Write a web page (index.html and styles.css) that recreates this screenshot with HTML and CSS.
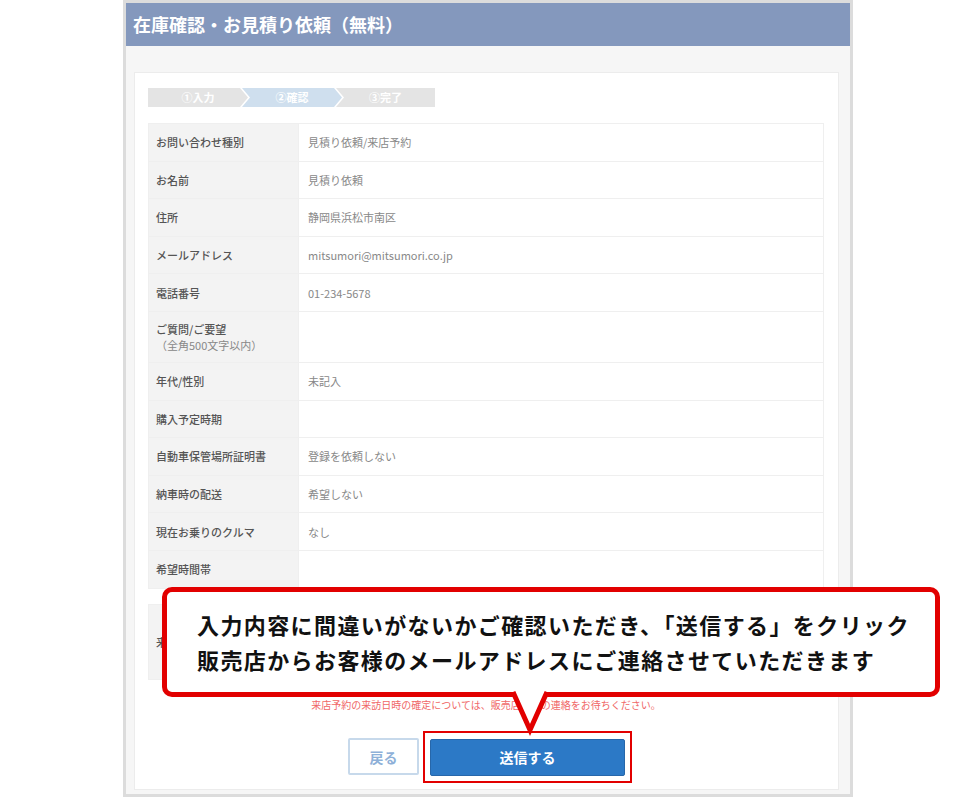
FILE: index.html
```html
<!DOCTYPE html>
<html lang="ja">

<head>
    <meta charset="UTF-8">
    <meta name="viewport" content="width=device-width, initial-scale=1.0">
    <title>在庫確認・お見積り依頼（無料）</title>
    <link rel="stylesheet" href="styles.css">
</head>

<body>

    <div class="frame">
        <h1 class="frame-title">在庫確認・お見積り依頼（無料）</h1>

        <div class="frame-body">
            <div class="card">
                <div class="steps">
                    <div class="step step-first">①入力</div>
                    <div class="step step-mid current">②確認</div>
                    <div class="step step-last">③完了</div>
                </div>

                <table class="confirm-table">
                    <tr><th>お問い合わせ種別</th><td>見積り依頼/来店予約</td></tr>
                    <tr><th>お名前</th><td>見積り依頼</td></tr>
                    <tr><th>住所</th><td>静岡県浜松市南区</td></tr>
                    <tr><th>メールアドレス</th><td>mitsumori@mitsumori.co.jp</td></tr>
                    <tr><th>電話番号</th><td>01-234-5678</td></tr>
                    <tr class="tall"><th>ご質問/ご要望<br><span class="note">（全角500文字以内）</span></th><td></td></tr>
                    <tr><th>年代/性別</th><td>未記入</td></tr>
                    <tr><th>購入予定時期</th><td></td></tr>
                    <tr><th>自動車保管場所証明書</th><td>登録を依頼しない</td></tr>
                    <tr><th>納車時の配送</th><td>希望しない</td></tr>
                    <tr><th>現在お乗りのクルマ</th><td>なし</td></tr>
                    <tr><th>希望時間帯</th><td></td></tr>
                </table>

                <table class="confirm-table visit-table">
                    <tr><th>来</th><td></td></tr>
                </table>

                <p class="visit-note">来店予約の来訪日時の確定については、販売店からの連絡をお待ちください。</p>

                <div class="form-buttons">
                    <button class="btn-back">戻る</button>
                    <span class="send-mark">
                        <button class="btn-send">送信する</button>
                    </span>
                </div>
            </div>
        </div>

        <!-- 説明用の吹き出し -->
        <div class="callout">
            <p>入力内容に間違いがないかご確認いただき、「送信する」をクリック</p>
            <p>販売店からお客様のメールアドレスにご連絡させていただきます</p>
            <svg class="callout-tail" width="52" height="50" viewBox="0 0 52 50">
                <polygon points="9,0 43,0 43,8 26,44 9,8" fill="#fff" />
                <polyline points="9,8 26,46 43,8" fill="none" stroke="#e20000" stroke-width="5" stroke-linejoin="miter" />
            </svg>
        </div>
    </div>

</body>

</html>
```

FILE: styles.css
```css
body {
    margin: 0;
    background: #fff;
    font-family: "Noto Sans CJK JP", "Noto Sans", sans-serif;
}

.frame {
    position: relative;
    margin-left: 123px;
    width: 724px;
    height: 791px;
    border: 3px solid #dcdcdc;
    background: #f6f6f6;
    overflow: visible;
}

.frame-title {
    margin: 0;
    height: 43px;
    padding-left: 7px;
    background: #8498bd;
    color: #fff;
    font-size: 18px;
    font-weight: bold;
    line-height: 43px;
}

.frame-body {
    padding: 26px 11px 0 8px;
}

.card {
    background: #fff;
    border: 1px solid #ececec;
    padding: 15px 14px 6px 13px;
}

/* ステップ表示 */
.steps {
    display: flex;
    height: 19px;
}

.step {
    width: 100px;
    color: #fff;
    font-size: 11px;
    font-weight: bold;
    line-height: 19px;
    text-align: center;
    background: #e4e4e4;
}

.step + .step {
    margin-left: -6px;
}

.step-first {
    clip-path: polygon(0 0, calc(100% - 8px) 0, 100% 50%, calc(100% - 8px) 100%, 0 100%);
}

.step-mid {
    clip-path: polygon(0 0, calc(100% - 8px) 0, 100% 50%, calc(100% - 8px) 100%, 0 100%, 8px 50%);
}

.step-last {
    width: 99px;
    clip-path: polygon(0 0, 100% 0, 100% 100%, 0 100%, 8px 50%);
}

.step.current {
    background: #cfdfee;
}

.confirm-table {
    width: 100%;
    margin-top: 16px;
    border-collapse: collapse;
    font-size: 11px;
}

.confirm-table tr {
    height: 37.6px;
}

.confirm-table tr.tall {
    height: 51px;
}

.confirm-table th,
.confirm-table td {
    border: 1px solid #efefef;
    text-align: left;
    vertical-align: middle;
    padding: 0 8px;
    line-height: 16px;
}

.confirm-table th {
    width: 134px;
    background: #f3f3f3;
    color: #555;
    font-weight: 500;
    padding-left: 7px;
}

.confirm-table td {
    color: #888;
    padding-left: 9px;
}

.confirm-table .note {
    color: #888;
    font-weight: normal;
}

.visit-table {
    margin-top: 15px;
}

.visit-table tr {
    height: 75px;
}

.visit-note {
    margin: 18px 0 0;
    color: #f06767;
    font-size: 10px;
    line-height: 14px;
    text-align: center;
}

.form-buttons {
    display: flex;
    justify-content: center;
    align-items: center;
    gap: 4px;
    margin-top: 19px;
    padding-left: 8px;
}

.form-buttons button {
    height: 37px;
    font-family: inherit;
    font-size: 14px;
    font-weight: bold;
    border-radius: 2px;
    cursor: pointer;
}

.btn-back {
    width: 71px;
    background: #fff;
    color: #8eb0d8;
    border: 2px solid #c7d9eb;
}

/* 送信ボタンを囲む赤枠 */
.send-mark {
    display: flex;
    padding: 6px 5px 5px;
    border: 2px solid #e20000;
}

.btn-send {
    width: 195px;
    background: #2c79c6;
    color: #fff;
    border: 1px solid #2767aa;
}

/* 吹き出し */
.callout {
    position: absolute;
    left: 36px;
    top: 584px;
    width: 738px;
    height: 85px;
    padding: 15px 0 0 30px;
    background: #fff;
    border: 5px solid #e20000;
    border-radius: 10px;
}

.callout p {
    margin: 0;
    color: #111;
    font-size: 22px;
    font-weight: bold;
    line-height: 35px;
    letter-spacing: 1.4px;
    white-space: nowrap;
}

.callout-tail {
    position: absolute;
    left: 337px;
    top: 92px;
    overflow: visible;
}
```
